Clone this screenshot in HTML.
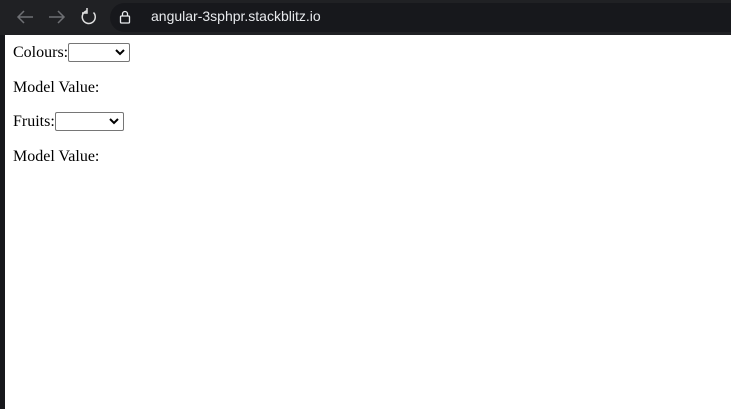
<!DOCTYPE html>
<html><head><style>
body{margin:0;width:731px;height:409px;background:#fff;position:relative;overflow:hidden;font-family:"Liberation Serif",serif;font-size:16px;color:#000}
.bar{position:absolute;left:0;top:0;width:731px;height:35px;background:#202124}
.pill{position:absolute;left:110px;top:3px;width:640px;height:29px;border-radius:15px;background:#17181c}
.url{position:absolute;left:151px;top:8px;font-family:"Liberation Sans",sans-serif;font-size:14px;color:#e8eaed}
.side{position:absolute;left:0;top:35px;width:5px;height:374px;background:#17181c}
.t{position:absolute;left:13px;white-space:nowrap}
.sel{position:absolute;height:17px;border:1px solid #767676;border-radius:2px;background:#fff;box-sizing:border-box}
.sel svg{position:absolute;right:4px;top:5px}
</style></head><body>
<div class="bar"><div class="pill"></div>
<svg style="position:absolute;left:15px;top:9px" width="20" height="16" viewBox="0 0 20 16"><path d="M18 8H3M9 2L3 8l6 6" stroke="#6e7074" stroke-width="1.5" fill="none"/></svg>
<svg style="position:absolute;left:47px;top:9px" width="20" height="16" viewBox="0 0 20 16"><path d="M2 8h15M11 2l6 6-6 6" stroke="#6e7074" stroke-width="1.5" fill="none"/></svg>
<svg style="position:absolute;left:79px;top:7px" width="20" height="20" viewBox="0 0 20 20"><path d="M14.5 5.5A6.5 6.5 0 1 1 8 3.7M8 1v5h-5" stroke="#e0e0e0" stroke-width="1.5" fill="none"/></svg>
<svg style="position:absolute;left:119px;top:10px" width="12" height="14" viewBox="0 0 12 14"><rect x="1.5" y="6" width="9" height="7" rx="1" stroke="#e8eaed" stroke-width="1.3" fill="none"/><path d="M3.5 6V4a2.5 2.5 0 0 1 5 0v2" stroke="#e8eaed" stroke-width="1.3" fill="none"/></svg>
<div class="url">angular-3sphpr.stackblitz.io</div></div>
<div class="side"></div>
<div class="t" style="top:44px">Colours:</div>
<div class="sel" style="left:68px;top:43px;width:62px;height:19px"><svg width="10" height="7" viewBox="0 0 10 7"><path d="M1 1l4 4 4-4" stroke="#000" stroke-width="2" fill="none"/></svg></div>
<div class="t" style="top:79px">Model Value:</div>
<div class="t" style="top:113px">Fruits:</div>
<div class="sel" style="left:55px;top:112px;width:69px;height:19px"><svg width="10" height="7" viewBox="0 0 10 7"><path d="M1 1l4 4 4-4" stroke="#000" stroke-width="2" fill="none"/></svg></div>
<div class="t" style="top:148px">Model Value:</div>
</body></html>
